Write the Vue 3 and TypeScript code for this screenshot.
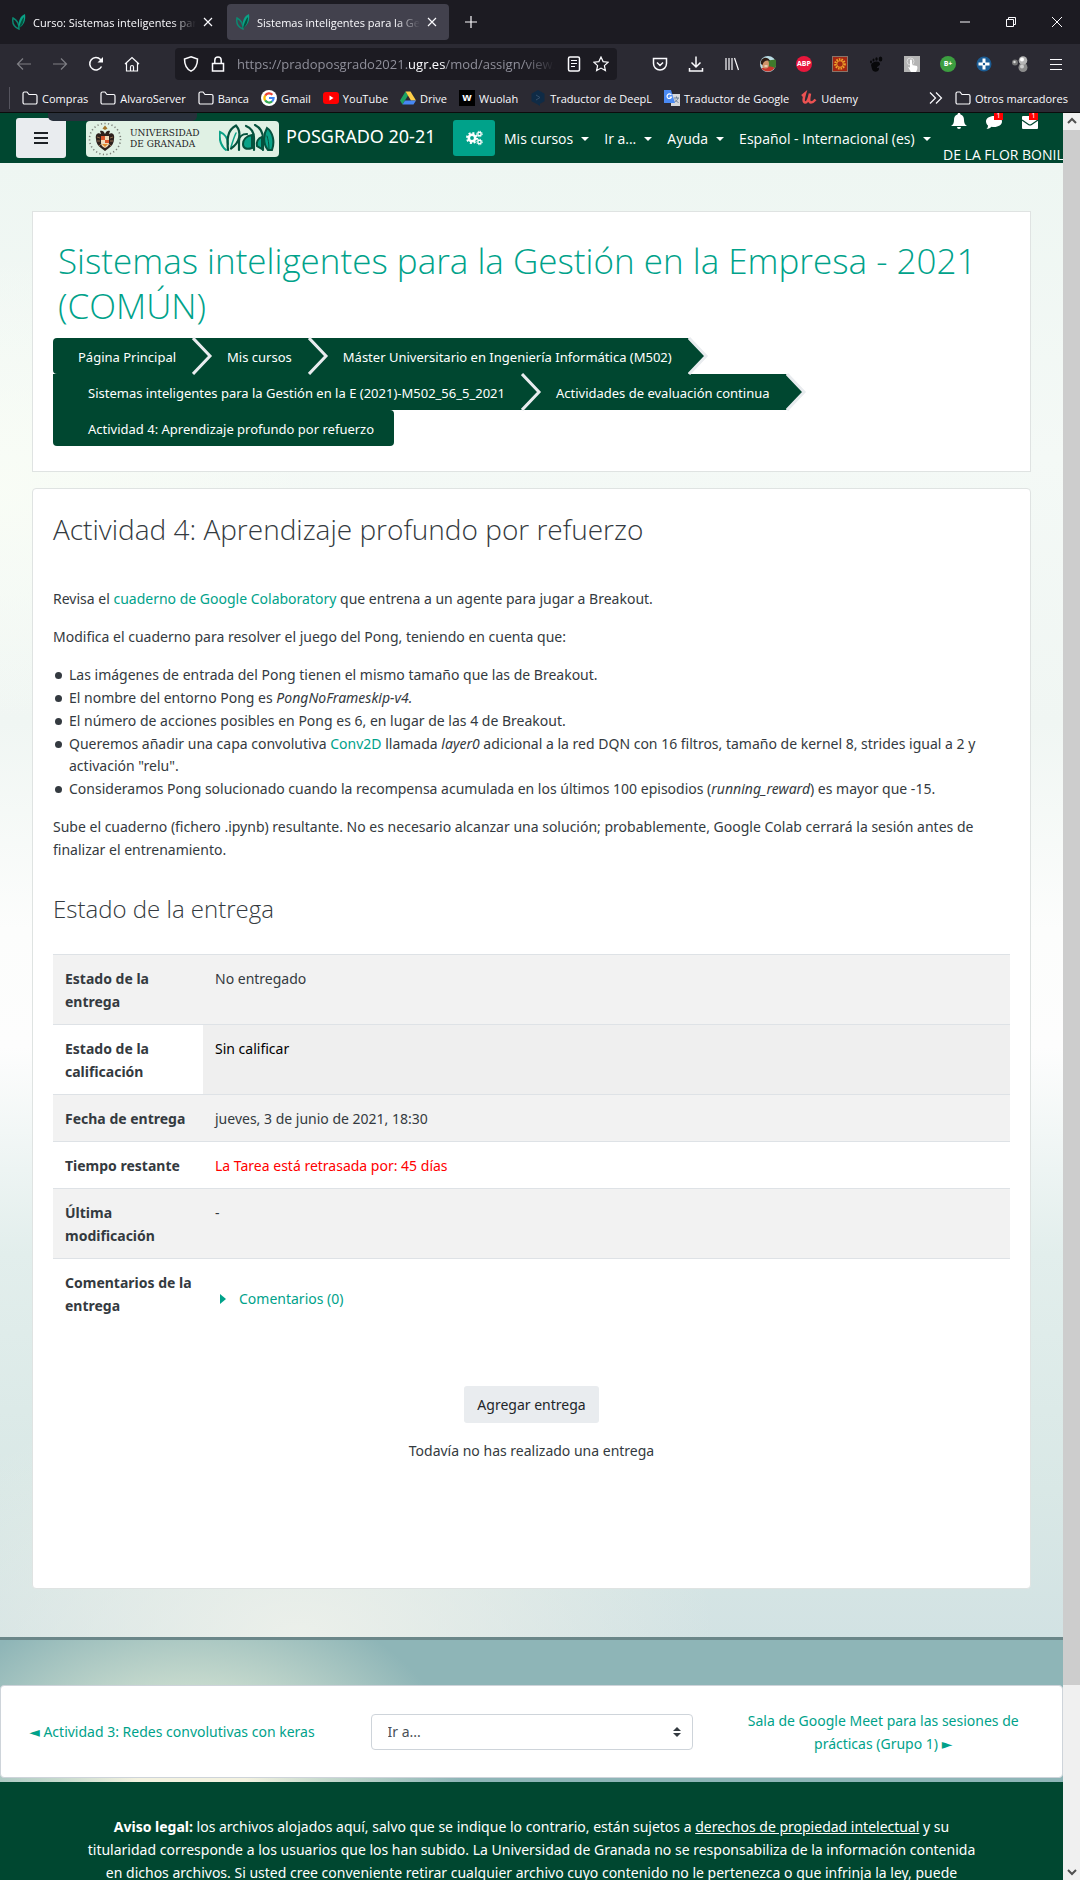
<script setup lang="ts">
interface StatusRow {
  label: string
  value: string
  kind?: 'graded' | 'late' | 'comments'
}

const menus: string[] = ['Mis cursos', 'Ir a...', 'Ayuda', 'Español - Internacional (es)']

const crumbs: string[] = [
  'Página Principal',
  'Mis cursos',
  'Máster Universitario en Ingeniería Informática (M502)',
  'Sistemas inteligentes para la Gestión en la E (2021)-M502_56_5_2021',
  'Actividades de evaluación continua',
  'Actividad 4: Aprendizaje profundo por refuerzo',
]

const rows: StatusRow[] = [
  { label: 'Estado de la entrega', value: 'No entregado' },
  { label: 'Estado de la calificación', value: 'Sin calificar', kind: 'graded' },
  { label: 'Fecha de entrega', value: 'jueves, 3 de junio de 2021, 18:30' },
  { label: 'Tiempo restante', value: 'La Tarea está retrasada por: 45 días', kind: 'late' },
  { label: 'Última modificación', value: '-' },
  { label: 'Comentarios de la entrega', value: 'Comentarios (0)', kind: 'comments' },
]
</script>

<template>
  <div class="browser">
    <div class="tabs">
      <div class="tab">
        <svg class="leaf" viewBox="0 0 14 16" width="14" height="16">
          <path d="M7 15C2 13 0 9 1 4c4 2 6 5 6 11z" fill="none" stroke="#0b8a72" stroke-width="1.4" />
          <path d="M7 14C6 7 8 2 13 0c1 6-1 11-6 14z" fill="#0aa287" />
          <path d="M7 14C8 9 10 5 12 3c0 5-2 9-5 11z" fill="#05523d" />
        </svg>
        <span class="tab-title">Curso: Sistemas inteligentes para la</span>
        <button class="plain" aria-label="Cerrar pestaña">
          <svg viewBox="0 0 10 10" width="10" height="10"><path d="M1 1l8 8M9 1L1 9" class="line" /></svg>
        </button>
      </div>
      <div class="tab active">
        <svg class="leaf" viewBox="0 0 14 16" width="14" height="16">
          <path d="M7 15C2 13 0 9 1 4c4 2 6 5 6 11z" fill="none" stroke="#0b8a72" stroke-width="1.4" />
          <path d="M7 14C6 7 8 2 13 0c1 6-1 11-6 14z" fill="#0aa287" />
          <path d="M7 14C8 9 10 5 12 3c0 5-2 9-5 11z" fill="#05523d" />
        </svg>
        <span class="tab-title">Sistemas inteligentes para la Gestión</span>
        <button class="plain" aria-label="Cerrar pestaña">
          <svg viewBox="0 0 10 10" width="10" height="10"><path d="M1 1l8 8M9 1L1 9" class="line" /></svg>
        </button>
      </div>
      <button class="plain new-tab" aria-label="Nueva pestaña">
        <svg viewBox="0 0 14 14" width="14" height="14"><path d="M7 1v12M1 7h12" class="line" /></svg>
      </button>
      <div class="window-controls">
        <button class="plain" aria-label="Minimizar">
          <svg viewBox="0 0 12 12" width="12" height="12"><path d="M1 6h10" class="line thin" /></svg>
        </button>
        <button class="plain" aria-label="Restaurar">
          <svg viewBox="0 0 12 12" width="12" height="12">
            <path d="M1.500 3.500h7v7h-7zM3.500 3.500v-2h7v7h-2" class="line thin" />
          </svg>
        </button>
        <button class="plain" aria-label="Cerrar">
          <svg viewBox="0 0 12 12" width="12" height="12"><path d="M1 1l10 10M11 1L1 11" class="line thin" /></svg>
        </button>
      </div>
    </div>

    <div class="toolbar">
      <div class="nav-buttons">
        <button class="plain dim" aria-label="Atrás">
          <svg viewBox="0 0 16 16" width="16" height="16"><path d="M15 8H1.500M7 2.500L1.500 8 7 13.500" class="line" /></svg>
        </button>
        <button class="plain dim" aria-label="Adelante">
          <svg viewBox="0 0 16 16" width="16" height="16"><path d="M1 8h13.500M9 2.500L14.500 8 9 13.500" class="line" /></svg>
        </button>
        <button class="plain" aria-label="Recargar">
          <svg viewBox="0 0 16 16" width="16" height="16">
            <path d="M13.500 10.500A6.200 6.200 0 1 1 12.500 3.500L14 5" class="line bold" />
            <path d="M15 1v5.500H9.500z" fill="#fbfbfe" />
          </svg>
        </button>
        <button class="plain" aria-label="Inicio">
          <svg viewBox="0 0 16 16" width="16" height="16">
            <path d="M1 8l7-6.500L15 8M2.500 7v8h11V7M6.500 15v-4a1.500 1.500 0 0 1 3 0v4" class="line" />
          </svg>
        </button>
      </div>
      <div class="urlbar">
        <svg viewBox="0 0 16 16" width="16" height="16">
          <path d="M8 .8L14.500 3c0 6-2 10-6.500 12.200C3.500 13 1.500 9 1.500 3z" class="line bold" />
        </svg>
        <svg viewBox="0 0 16 16" width="16" height="16">
          <path d="M2.500 7.500h11v7.500h-11zM4.800 7.500V4.200a3.200 3.200 0 0 1 6.400 0v3.300" class="line bold" />
        </svg>
        <div class="url" role="textbox" aria-label="Dirección">https://pradoposgrado2021.<b>ugr.es</b>/mod/assign/view.</div>
        <button class="plain" aria-label="Vista de lectura">
          <svg viewBox="0 0 16 16" width="16" height="16">
            <rect x="2.500" y="1" width="11" height="14" rx="1.500" class="line bold" />
            <path d="M5 4.500h6M5 7.500h6M5 10.500h4" class="line" />
          </svg>
        </button>
        <button class="plain" aria-label="Añadir a marcadores">
          <svg viewBox="0 0 16 16" width="16" height="16">
            <path d="M8 1l2.100 4.600 5 .6-3.700 3.400 1 5L8 12.100l-4.400 2.500 1-5L.9 6.200l5-.6z" class="line" />
          </svg>
        </button>
      </div>
      <div class="extensions">
        <button class="plain" aria-label="Pocket">
          <svg viewBox="0 0 16 16" width="16" height="16">
            <path d="M1.500 2.500h13v5a6.500 6.500 0 0 1-13 0zM5 6.500l3 3 3-3" class="line bold" />
          </svg>
        </button>
        <button class="plain" aria-label="Descargas">
          <svg viewBox="0 0 16 16" width="16" height="16">
            <path d="M8 .5v10M3.500 6.500L8 11l4.500-4.500M1.500 12v3h13v-3" class="line bold" />
          </svg>
        </button>
        <button class="plain" aria-label="Biblioteca">
          <svg viewBox="0 0 16 16" width="16" height="16"><path d="M2 2v12M5 2v12M8 2v12M10.500 2l4 12" class="line" /></svg>
        </button>
        <button class="plain" aria-label="Perfil">
          <svg viewBox="0 0 16 16" width="16" height="16">
            <circle cx="8" cy="8" r="8" fill="#b9dbe4" />
            <path d="M8 4.500l7.300-1A8 8 0 0 1 15 12L8 11z" fill="#3f7a2c" />
            <path d="M1.500 12.500c3-2 9-3 13-.5a8 8 0 0 1-13 .5z" fill="#c9352b" />
            <ellipse cx="5.500" cy="8" rx="3.500" ry="4.500" fill="#d09468" />
            <path d="M.8 8C0 1 8-.5 10 5 7 4 4 4 2.500 9z" fill="#2d1c14" />
            <path d="M4.500 10h3" stroke="#fff" />
          </svg>
        </button>
        <button class="plain badge abp" aria-label="Adblock Plus">ABP</button>
        <button class="plain" aria-label="Extensión sol">
          <svg viewBox="0 0 16 16" width="16" height="16">
            <rect x=".5" y=".5" width="15" height="15" fill="#a32613" stroke="#8a7468" />
            <circle cx="8" cy="8" r="4.600" fill="none" stroke="#efa12a" stroke-width="2.400" stroke-dasharray="1.500 1" />
            <circle cx="8" cy="8" r="3.300" fill="#a32613" stroke="#efa12a" />
          </svg>
        </button>
        <button class="plain" aria-label="Gnome">
          <svg viewBox="0 0 16 16" width="16" height="16" fill="#08080a">
            <path d="M3 9c1-4 9-5 9-1 0 2-3 2-3 4 1 0 2-1 2 1 0 3-6 4-7 0z" />
            <ellipse cx="3" cy="6" rx="1" ry="1.400" /><ellipse cx="5.500" cy="4" rx="1" ry="1.500" />
            <ellipse cx="8.500" cy="3" rx="1.200" ry="1.800" /><ellipse cx="12.500" cy="3" rx="1.800" ry="2.500" />
          </svg>
        </button>
        <button class="plain" aria-label="Gestos">
          <svg viewBox="0 0 16 16" width="16" height="16">
            <rect width="16" height="16" fill="#b4b4b4" />
            <circle cx="6.500" cy="5.500" r="3.500" fill="none" stroke="#dedede" />
            <path d="M6 4c1.500-1 2 0 2 1v4l5 1c1 2 0 4-1 6H7L4 11l2 .5z" fill="#fff" />
          </svg>
        </button>
        <button class="plain badge bplus" aria-label="B más">B+</button>
        <button class="plain" aria-label="Dirección azul">
          <svg viewBox="0 0 16 16" width="16" height="16">
            <circle cx="8" cy="8" r="7.500" fill="#1b5c94" />
            <path d="M6.500 2.500h3v4h4v3h-4v4h-3v-4h-4v-3h4z" fill="#fff" />
            <circle cx="8" cy="8" r="1.200" fill="#1b5c94" />
          </svg>
        </button>
        <button class="plain" aria-label="Esferas">
          <svg viewBox="0 0 16 16" width="16" height="16">
            <circle cx="3" cy="6.500" r="3" fill="#777" /><circle cx="2.500" cy="6" r="1.200" fill="#ddd" />
            <circle cx="11" cy="11.500" r="4.500" fill="#8c8c8c" /><circle cx="10" cy="10.500" r="2" fill="#ccc" />
            <circle cx="11" cy="4.500" r="4.300" fill="#b5b5b5" /><circle cx="10" cy="3.500" r="2" fill="#fff" />
          </svg>
        </button>
        <button class="plain" aria-label="Menú">
          <svg viewBox="0 0 16 16" width="16" height="16"><path d="M2 3.500h12M2 8.500h12M2 13.500h12" class="line" /></svg>
        </button>
      </div>
    </div>

    <nav class="bookmarks" aria-label="Marcadores">
      <span class="divider"></span>
      <a v-for="name in ['Compras', 'AlvaroServer', 'Banca']" :key="name" href="#">
        <svg viewBox="0 0 16 16" width="16" height="16">
          <path d="M1 3.500a1.500 1.500 0 0 1 1.500-1.500H5l2 2.500h6.500A1.500 1.500 0 0 1 15 6v6.500a1.500 1.500 0 0 1-1.500 1.500h-11A1.500 1.500 0 0 1 1 12.500z" class="line" />
        </svg>
        {{ name }}
      </a>
      <a href="#">
        <svg viewBox="0 0 16 16" width="16" height="16">
          <circle cx="8" cy="8" r="8" fill="#fff" />
          <g fill="none" stroke-width="2.200">
            <path d="M4.200 5.600A4.600 4.600 0 0 1 11.400 4.700" stroke="#ea4335" />
            <path d="M4.200 10.500A4.600 4.600 0 0 1 4.200 5.500" stroke="#fbbc05" />
            <path d="M11.200 11.300A4.600 4.600 0 0 1 4.200 10.400" stroke="#34a853" />
            <path d="M8 8h4.600a4.600 4.600 0 0 1-1.500 3.400" stroke="#4285f4" />
          </g>
        </svg>
        Gmail
      </a>
      <a href="#">
        <svg viewBox="0 0 16 16" width="16" height="16">
          <rect y="2" width="16" height="12" rx="3" fill="#f00" /><path d="M6.500 5.500v5l4-2.500z" fill="#fff" />
        </svg>
        YouTube
      </a>
      <a href="#">
        <svg viewBox="0 0 16 16" width="16" height="16">
          <path d="M5.500 1.500L0 10.500 2.500 14.500 8 5.500z" fill="#1ea362" />
          <path d="M5.500 1.500h5L16 10.500h-5z" fill="#ffcf48" />
          <path d="M5 10.500h11L13.500 14.500h-11z" fill="#4688f4" />
        </svg>
        Drive
      </a>
      <a href="#"><span class="wuolah">w</span>Wuolah</a>
      <a href="#">
        <svg viewBox="0 0 16 16" width="16" height="16">
          <path d="M8 0l6.500 3.700v7.500L10 13.800V16l-3-2L1.500 11.200V3.700z" fill="#0f2b46" />
          <path d="M6 5l4 2.500-4 2.500" fill="none" stroke="#36506b" />
        </svg>
        Traductor de DeepL
      </a>
      <a href="#">
        <svg viewBox="0 0 16 16" width="16" height="16">
          <rect x="7" y="4" width="9" height="12" fill="#d6d8db" />
          <path d="M10 8h5M12.500 6.500v1.500M14 8c-.5 2-2 3.500-3.500 4M11 9.500c1 1.500 2.500 2.500 3.500 3" fill="none" stroke="#6b7f95" />
          <path d="M0 0h7l4 13H0z" fill="#4a8af4" />
          <path d="M7.300 5A2.300 2.300 0 1 0 7.500 7H5.500" fill="none" stroke="#fff" stroke-width="1.200" />
        </svg>
        Traductor de Google
      </a>
      <a href="#">
        <svg viewBox="0 0 16 16" width="16" height="16">
          <path d="M1 6l3-2.500C3 7 1.500 12 4 12.500S8 8 9 3.500C8 8 7.500 12.500 10 12.500q2 0 4.500-3" fill="none" stroke="#ec5252" stroke-width="2.500" />
        </svg>
        Udemy
      </a>
      <button class="plain more" aria-label="Más marcadores">
        <svg viewBox="0 0 14 14" width="14" height="14"><path d="M1 1.500L6.500 7 1 12.500M7 1.500L12.500 7 7 12.500" class="line" /></svg>
      </button>
      <a href="#">
        <svg viewBox="0 0 16 16" width="16" height="16">
          <path d="M1 3.500a1.500 1.500 0 0 1 1.500-1.500H5l2 2.500h6.500A1.500 1.500 0 0 1 15 6v6.500a1.500 1.500 0 0 1-1.500 1.500h-11A1.500 1.500 0 0 1 1 12.500z" class="line" />
        </svg>
        Otros marcadores
      </a>
    </nav>

    <div class="viewport">
      <div class="page">
        <header class="site-header">
          <span class="hover-strip"></span>
          <button class="drawer" aria-label="Panel lateral">
            <svg viewBox="0 0 14 14" width="14" height="14"><path d="M0 2h14M0 7h14M0 12h14" stroke="#1d2125" stroke-width="2" /></svg>
          </button>
          <a href="#" class="brand" aria-label="Inicio">
            <svg viewBox="0 0 34 34" width="34" height="34">
              <circle cx="17" cy="17" r="15.500" fill="none" stroke="#7d817a" stroke-width="1.600" stroke-dasharray="1.200 2.400" />
              <path d="M17 3.500l2.500 3-2.500 1.500-2.500-1.500z" fill="#a3752a" />
              <path d="M17 12c-1-3-3-4-5-3l1 3c-3-2-6 0-5 5 0 4 2 7 5 9l4 3 4-3c3-2 5-5 5-9 1-5-2-7-5-5l1-3c-2-1-4 0-5 3z" fill="#2e211d" />
              <path d="M9 15l3 1M9 19l3 0M25 15l-3 1M25 19l-3 0M11 24l2-2M23 24l-2-2" stroke="#8f6b4a" />
              <path d="M13 14h8v7c0 3-2 4-4 5-2-1-4-2-4-5z" fill="#efd9b8" />
              <path d="M13 14h4v4h-4zM17 18h4v3h-4z" fill="#d8562c" />
              <path d="M14 22h6l-3 3z" fill="#e08a2c" />
            </svg>
            <span class="ugr">UNIVERSIDAD<br />DE GRANADA</span>
            <svg class="prado" viewBox="0 0 56 30" width="56" height="30" fill="none" stroke-linecap="round">
              <path d="M7 26C2 22 0 15 1 8c5 2 8 7 8 12" stroke="#0aa287" stroke-width="2" />
              <path d="M12 23c2-6 3-10 5-14" stroke="#0aa287" stroke-width="1.500" />
              <path d="M9 26C8 16 8 6 17 1.500c6 7 4 17-5 23" stroke="#05523d" stroke-width="2.200" />
              <path d="M20 26v-9c0-4 3-7 8-7" stroke="#05523d" stroke-width="2.200" />
              <path d="M33 11c-6 1-9 5-9 9s3 6 9 4z" fill="#0aa287" stroke="#05523d" stroke-width="2" />
              <path d="M27 2c5 2 8 6 8 12v12" stroke="#05523d" stroke-width="2.200" />
              <path d="M43 13c-4 1-6 5-5 9l5 3z" fill="#0aa287" stroke="#05523d" stroke-width="2" />
              <path d="M36 1c6 3 8 9 8 14v11" stroke="#05523d" stroke-width="2.200" />
              <path d="M49 26c-5-6-5-15-1-22 6 4 8 14 5 22z" fill="#0aa287" stroke="#05523d" stroke-width="2" />
              <path d="M50 25c0-6-1-10-2-13" stroke="#05523d" />
            </svg>
          </a>
          <a href="#" class="site-name">POSGRADO 20-21</a>
          <button class="gears" aria-label="Ajustes">
            <svg viewBox="0 0 17 16" width="17" height="16" fill="none" stroke="#fff">
              <circle cx="6" cy="8" r="3.200" stroke-width="2.600" />
              <circle cx="6" cy="8" r="5" stroke-width="2" stroke-dasharray="2 1.900" />
              <circle cx="13.500" cy="4" r="1.700" stroke-width="1.400" />
              <circle cx="13.500" cy="4" r="2.800" stroke-dasharray="1.200 1" />
              <circle cx="13.500" cy="12" r="1.700" stroke-width="1.400" />
              <circle cx="13.500" cy="12" r="2.800" stroke-dasharray="1.200 1" />
            </svg>
          </button>
          <nav class="menus" aria-label="Principal">
            <a v-for="menu in menus" :key="menu" href="#">{{ menu }}<i class="caret"></i></a>
          </nav>
          <div class="user">
            <div class="alerts">
              <button class="plain" aria-label="Notificaciones">
                <svg viewBox="0 0 16 17" width="16" height="17">
                  <path d="M8 0c1 0 1.500.6 1.500 1.500C12 2.300 13 4 13 7c0 3 1 5 3 6H0c2-1 3-3 3-6 0-3 1-4.700 3.500-5.500C6.500.6 7 0 8 0zM6 14h4a2 2 0 0 1-4 0z" fill="#fff" />
                </svg>
              </button>
              <button class="plain" aria-label="Mensajes">
                <svg viewBox="0 0 17 17" width="17" height="17">
                  <path d="M8 3c4.500 0 8 2.300 8 5.500S12.500 14 8 14c-1 0-1.500 0-2.500-.3C4 15 2 16 .5 16c1-1 1.500-2 1.500-3.500C.8 11.500 0 10 0 8.500 0 5.300 3.500 3 8 3z" fill="#fff" />
                </svg>
                <span class="count">1</span>
              </button>
              <button class="plain" aria-label="Correo">
                <svg viewBox="0 0 16 17" width="16" height="17">
                  <rect y="3" width="16" height="13" rx="1" fill="#fff" />
                  <path d="M0 7l6.500 4.500q1.500 1 3 0L16 7" fill="none" stroke="#004730" stroke-width="1.200" />
                </svg>
                <span class="count">1</span>
              </button>
            </div>
            <a href="#" class="user-name">DE LA FLOR BONILLA</a>
          </div>
        </header>

        <main class="content">
          <section class="card course">
            <h1><a href="#">Sistemas inteligentes para la Gestión en la Empresa - 2021 (COMÚN)</a></h1>
            <ol class="crumbs">
              <li v-for="(crumb, i) in crumbs" :key="crumb">
                <a href="#">{{ crumb }}</a>
                <svg v-if="i < crumbs.length - 1" class="chevron" viewBox="0 0 22 38" width="22" height="38">
                  <path d="M0 1l17 18L0 37z" fill="#004730" />
                  <path d="M1 1l17 18L1 37" fill="none" stroke="#e9ecef" stroke-width="3" />
                </svg>
              </li>
            </ol>
          </section>

          <section class="card activity">
            <h2>Actividad 4: Aprendizaje profundo por refuerzo</h2>
            <p>Revisa el <a href="#">cuaderno de Google Colaboratory</a> que entrena a un agente para jugar a Breakout.</p>
            <p>Modifica el cuaderno para resolver el juego del Pong, teniendo en cuenta que:</p>
            <ul>
              <li>Las imágenes de entrada del Pong tienen el mismo tamaño que las de Breakout.</li>
              <li>El nombre del entorno Pong es <em>PongNoFrameskip-v4.</em></li>
              <li>El número de acciones posibles en Pong es 6, en lugar de las 4 de Breakout.</li>
              <li>Queremos añadir una capa convolutiva <a href="#">Conv2D</a> llamada <em>layer0</em> adicional a la red DQN con 16 filtros, tamaño de kernel 8, strides igual a 2 y activación "relu".</li>
              <li>Consideramos Pong solucionado cuando la recompensa acumulada en los últimos 100 episodios (<em>running_reward</em>) es mayor que -15.</li>
            </ul>
            <p>Sube el cuaderno (fichero .ipynb) resultante. No es necesario alcanzar una solución; probablemente, Google Colab cerrará la sesión antes de finalizar el entrenamiento.</p>

            <h3>Estado de la entrega</h3>
            <table>
              <tbody>
                <tr v-for="row in rows" :key="row.label">
                  <th scope="row">{{ row.label }}</th>
                  <td :class="row.kind">
                    <a v-if="row.kind === 'comments'" href="#"><i class="expand"></i>{{ row.value }}</a>
                    <template v-else>{{ row.value }}</template>
                  </td>
                </tr>
              </tbody>
            </table>
            <div class="submit">
              <button class="add">Agregar entrega</button>
              <p>Todavía no has realizado una entrega</p>
            </div>
          </section>
        </main>

        <div class="backdrop">
          <nav class="jump" aria-label="Actividades">
            <a href="#" class="previous"><span class="pointer">◄</span> Actividad 3: Redes convolutivas con keras</a>
            <div class="select">
              <select aria-label="Ir a...">
                <option>Ir a...</option>
              </select>
              <svg viewBox="0 0 8 10" width="8" height="10"><path d="M4 0l4 4H0zM4 10l4-4H0z" fill="#343a40" /></svg>
            </div>
            <a href="#" class="next">Sala de Google Meet para las sesiones de prácticas (Grupo 1) <span class="pointer">►</span></a>
          </nav>
        </div>

        <footer class="legal">
          <p>
            <strong>Aviso legal:</strong> los archivos alojados aquí, salvo que se indique lo contrario, están sujetos a
            <a href="#">derechos de propiedad intelectual</a> y su titularidad corresponde a los usuarios que los han
            subido. La Universidad de Granada no se responsabiliza de la información contenida en dichos archivos. Si
            usted cree conveniente retirar cualquier archivo cuyo contenido no le pertenezca o que infrinja la ley, puede
          </p>
        </footer>
      </div>

      <div class="scrollbar" aria-hidden="true">
        <svg viewBox="0 0 17 17" width="17" height="17"><path d="M5 10l4-4 4 4" fill="none" stroke="#505050" stroke-width="2" /></svg>
        <div class="track"><div class="thumb"></div></div>
        <svg viewBox="0 0 17 17" width="17" height="17"><path d="M5 7l4 4 4-4" fill="none" stroke="#505050" stroke-width="2" /></svg>
      </div>
    </div>
  </div>
</template>

<style>
body {
  margin: 0;
}
</style>

<style scoped>
.browser {
  display: flex;
  flex-direction: column;
  height: 100vh;
  overflow: hidden;
  font-family: 'Open Sans', 'Noto Sans', sans-serif;
  font-size: 14px;
  line-height: 23px;
  color: #343a40;
}
.browser *,
.browser *::before {
  box-sizing: border-box;
}
svg {
  display: block;
  flex: none;
}
a {
  color: #00a28a;
  text-decoration: none;
}
button,
select {
  font: inherit;
}
.plain {
  position: relative;
  display: flex;
  align-items: center;
  justify-content: center;
  padding: 0;
  border: 0;
  background: none;
  color: #fff;
}
.line {
  fill: none;
  stroke: #fbfbfe;
  stroke-width: 1.2;
}
.line.bold {
  stroke-width: 1.5;
}
.line.thin {
  stroke-width: 1;
}

/* Browser chrome */
.tabs {
  display: flex;
  align-items: center;
  flex: none;
  height: 44px;
  padding: 0 17px 0 3px;
  background: #1c1b22;
  font-size: 11px;
  color: #fbfbfe;
}
.tab {
  display: flex;
  align-items: center;
  gap: 7px;
  width: 222px;
  height: 36px;
  margin-right: 2px;
  padding: 0 12px 0 9px;
  border-radius: 4px;
}
.tab.active {
  background: #42414d;
}
.tab-title {
  flex: 1;
  overflow: hidden;
  white-space: nowrap;
  mask-image: linear-gradient(to left, transparent, #000 24px);
}
.new-tab {
  margin-left: 13px;
}
.window-controls {
  display: flex;
  gap: 34px;
  margin-left: auto;
}
.toolbar {
  display: flex;
  align-items: center;
  flex: none;
  height: 40px;
  padding: 0 16px;
  background: #2b2a33;
}
.nav-buttons {
  display: flex;
  gap: 20px;
  width: 159px;
}
.dim {
  opacity: 0.4;
}
.urlbar {
  display: flex;
  align-items: center;
  flex: 1;
  gap: 11px;
  height: 32px;
  padding: 0 8px;
  border-radius: 4px;
  background: #1c1b22;
}
.url {
  flex: 1;
  width: 0;
  overflow: hidden;
  white-space: nowrap;
  font-size: 13px;
  color: #8f8f9a;
  mask-image: linear-gradient(to left, transparent, #000 32px);
}
.url b {
  font-weight: 400;
  color: #fbfbfe;
}
.extensions {
  display: flex;
  gap: 20px;
  margin-left: 35px;
}
.badge {
  width: 16px;
  height: 16px;
  border-radius: 8px;
  font-size: 7px;
  font-weight: 700;
  line-height: 16px;
}
.abp {
  background: #e8173c;
}
.bplus {
  background: #3c9e40;
}
.bookmarks {
  display: flex;
  align-items: center;
  flex: none;
  gap: 12px;
  height: 29px;
  padding: 0 12px 0 9px;
  border-bottom: 1px solid #0c0c0d;
  background: #2b2a33;
  font-size: 11px;
  white-space: nowrap;
}
.bookmarks a {
  display: flex;
  align-items: center;
  gap: 4px;
  color: #fbfbfe;
}
.divider {
  width: 1px;
  height: 22px;
  background: #55545e;
}
.wuolah {
  width: 16px;
  height: 16px;
  background: #000;
  font-weight: 700;
  line-height: 14px;
  text-align: center;
}
.more {
  margin-left: auto;
}

/* Page */
.viewport {
  display: flex;
  flex: 1;
  min-height: 0;
}
.page {
  flex: 1;
  min-width: 0;
  overflow: hidden;
}
.site-header {
  position: relative;
  z-index: 2;
  display: flex;
  height: 50px;
  padding-left: 16px;
  overflow: hidden;
  background: #004730;
}
.site-header a {
  color: #fff;
  white-space: nowrap;
}
.hover-strip {
  position: absolute;
  top: 0;
  left: 48px;
  width: 149px;
  height: 8px;
  border-radius: 0 0 5px 5px;
  background: #28303b;
}
.drawer {
  display: flex;
  align-items: center;
  justify-content: center;
  width: 50px;
  height: 40px;
  margin-top: 5px;
  border: 0;
  border-radius: 3px;
  background: #e9ecef;
}
.brand {
  display: flex;
  align-items: center;
  width: 193px;
  height: 36px;
  margin: 8px 7px 0 20px;
  padding: 0 4px 0 2px;
  border-radius: 4px;
  background: #e0f1e4;
}
.brand .ugr {
  margin-left: 8px;
  font-family: 'DejaVu Serif', serif;
  font-size: 9px;
  line-height: 11px;
  color: #22221f;
}
.prado {
  margin-left: auto;
}
.site-name {
  width: 167px;
  margin-top: 12px;
  font-family: 'Noto Sans', sans-serif;
  font-size: 18px;
}
.gears {
  display: flex;
  align-items: center;
  justify-content: center;
  width: 42px;
  height: 36px;
  margin: 7px 9px 0 0;
  padding: 0;
  border: 0;
  border-radius: 3px;
  background: #00a28a;
}
.menus {
  display: flex;
  flex: 1;
  gap: 15px;
  align-items: flex-start;
  margin-top: 14px;
}
.menus a {
  display: flex;
  align-items: center;
}
.caret {
  margin-left: 8px;
  border: 4px solid transparent;
  border-top-color: #fff;
  border-bottom: 0;
}
.user {
  flex: none;
  width: 120px;
}
.alerts {
  display: flex;
  gap: 19px;
  padding-left: 8px;
}
.count {
  position: absolute;
  top: 0;
  right: 0;
  width: 9px;
  height: 7px;
  overflow: hidden;
  background: #f00;
  font-size: 8px;
  line-height: 4px;
}
.user-name {
  display: block;
  margin-top: 13px;
}
.content {
  padding: 48px 32px;
  background:
    radial-gradient(ellipse 420px 260px at 28% 100%, rgba(238, 241, 235, 0.9), transparent),
    radial-gradient(ellipse 30% 16% at 0 22%, rgba(249, 253, 246, 0.9), transparent),
    linear-gradient(#eef6f2 0, #f4f9f6 20%, #f0f6f3 38%, #fcfdfc 52%, #fdfdfd 60%, #e2eeec 74%, #d9e8e6 90%, #d2e2e3 100%);
}
.card {
  border: 1px solid #dfe3e2;
  background: #fff;
}
h1,
h2,
h3 {
  margin: 0;
  font-weight: 300;
}
.course {
  margin-bottom: 16px;
  padding: 26px 20px 25px;
}
h1 {
  margin: 0 5px 10px;
  font-size: 35px;
  line-height: 45px;
}
.crumbs,
.activity p,
.activity li,
table,
.add,
.jump,
.legal {
  font-family: 'Noto Sans', 'Open Sans', sans-serif;
}
.crumbs {
  display: flex;
  flex-wrap: wrap;
  margin: 0;
  padding: 0;
  list-style: none;
  font-size: 13px;
}
.crumbs li {
  position: relative;
  height: 36px;
  padding: 0 16px 0 35px;
  background: #004730;
  line-height: 38px;
}
.crumbs li:first-child {
  padding-left: 25px;
  border-radius: 4px 0 0 4px;
}
.crumbs li:last-child {
  padding-right: 20px;
  border-radius: 0 4px 4px 4px;
}
.crumbs a {
  color: #fff;
}
.chevron {
  position: absolute;
  top: -1px;
  left: 100%;
  z-index: 1;
}
.activity {
  padding: 23px 20px 126px;
  border-radius: 4px;
}
h2 {
  margin-bottom: 41px;
  font-size: 28px;
  line-height: 34px;
}
p {
  margin: 0 0 15px;
}
ul {
  display: flex;
  flex-direction: column;
  gap: 1px;
  margin: 16px 0 15px;
  padding-left: 16px;
  list-style: none;
  line-height: 22px;
}
ul li {
  position: relative;
}
ul li::before {
  position: absolute;
  top: 8px;
  left: -14px;
  width: 7px;
  height: 7px;
  border-radius: 4px;
  background: #343a40;
  content: '';
}
h3 {
  margin: 33px 0 31px;
  font-size: 24px;
  line-height: 29px;
}
table {
  width: 100%;
  border-collapse: separate;
  border-spacing: 0;
}
th,
td {
  padding: 12px 12px 11px;
  border-top: 1px solid #dee2e6;
  text-align: left;
  vertical-align: top;
}
th {
  width: 150px;
  padding-right: 4px;
  font-weight: 700;
}
tr:nth-child(odd) {
  background: #f2f2f2;
}
.graded {
  background: #efefef;
  color: #000;
}
.late {
  color: #ff0000;
}
.comments {
  padding-top: 28px;
}
.comments a {
  display: flex;
  align-items: center;
}
.expand {
  margin: 0 13px 0 5px;
  border: 5px solid transparent;
  border-left: 6px solid #00a28a;
  border-right: 0;
}
.submit {
  margin-top: 58px;
  text-align: center;
}
.submit p {
  margin: 0;
}
.add {
  height: 37px;
  margin-bottom: 16px;
  padding: 0 13px;
  border: 0;
  border-radius: 3px;
  background: #e9ecef;
  color: #212529;
}
.backdrop {
  padding: 45px 0 4px;
  border-top: 3px solid #6b8789;
  background: radial-gradient(ellipse 180px 130px at 18% 100%, #f3f2e0 30%, #c5d9cd 75%, transparent 150%), #8eb5b7;
}
.jump {
  display: grid;
  grid-template-columns: 1fr 322px 1fr;
  align-items: center;
  height: 93px;
  border: 1px solid #ced4da;
  border-radius: 4px;
  background: #fff;
}
.previous {
  padding-left: 28px;
}
.next {
  padding: 0 32px 0 44px;
  text-align: center;
}
.pointer {
  font-family: 'DejaVu Sans', sans-serif;
  line-height: 1;
}
.select {
  position: relative;
}
.select select {
  display: block;
  width: 100%;
  height: 36px;
  padding: 0 16px;
  appearance: none;
  border: 1px solid #ced4da;
  border-radius: 4px;
  background: #fff;
  color: #495057;
}
.select svg {
  position: absolute;
  top: 13px;
  right: 12px;
}
.legal {
  padding: 33px 80px 100px;
  background: #004730;
  color: #fff;
  text-align: center;
}
.legal a {
  color: #fff;
  text-decoration: underline;
}

/* Scrollbar */
.scrollbar {
  display: flex;
  flex-direction: column;
  flex: none;
  width: 17px;
  background: #f0f0f0;
}
.track {
  flex: 1;
}
.thumb {
  height: calc(100% - 178px);
  background: #cdcdcd;
}
</style>
